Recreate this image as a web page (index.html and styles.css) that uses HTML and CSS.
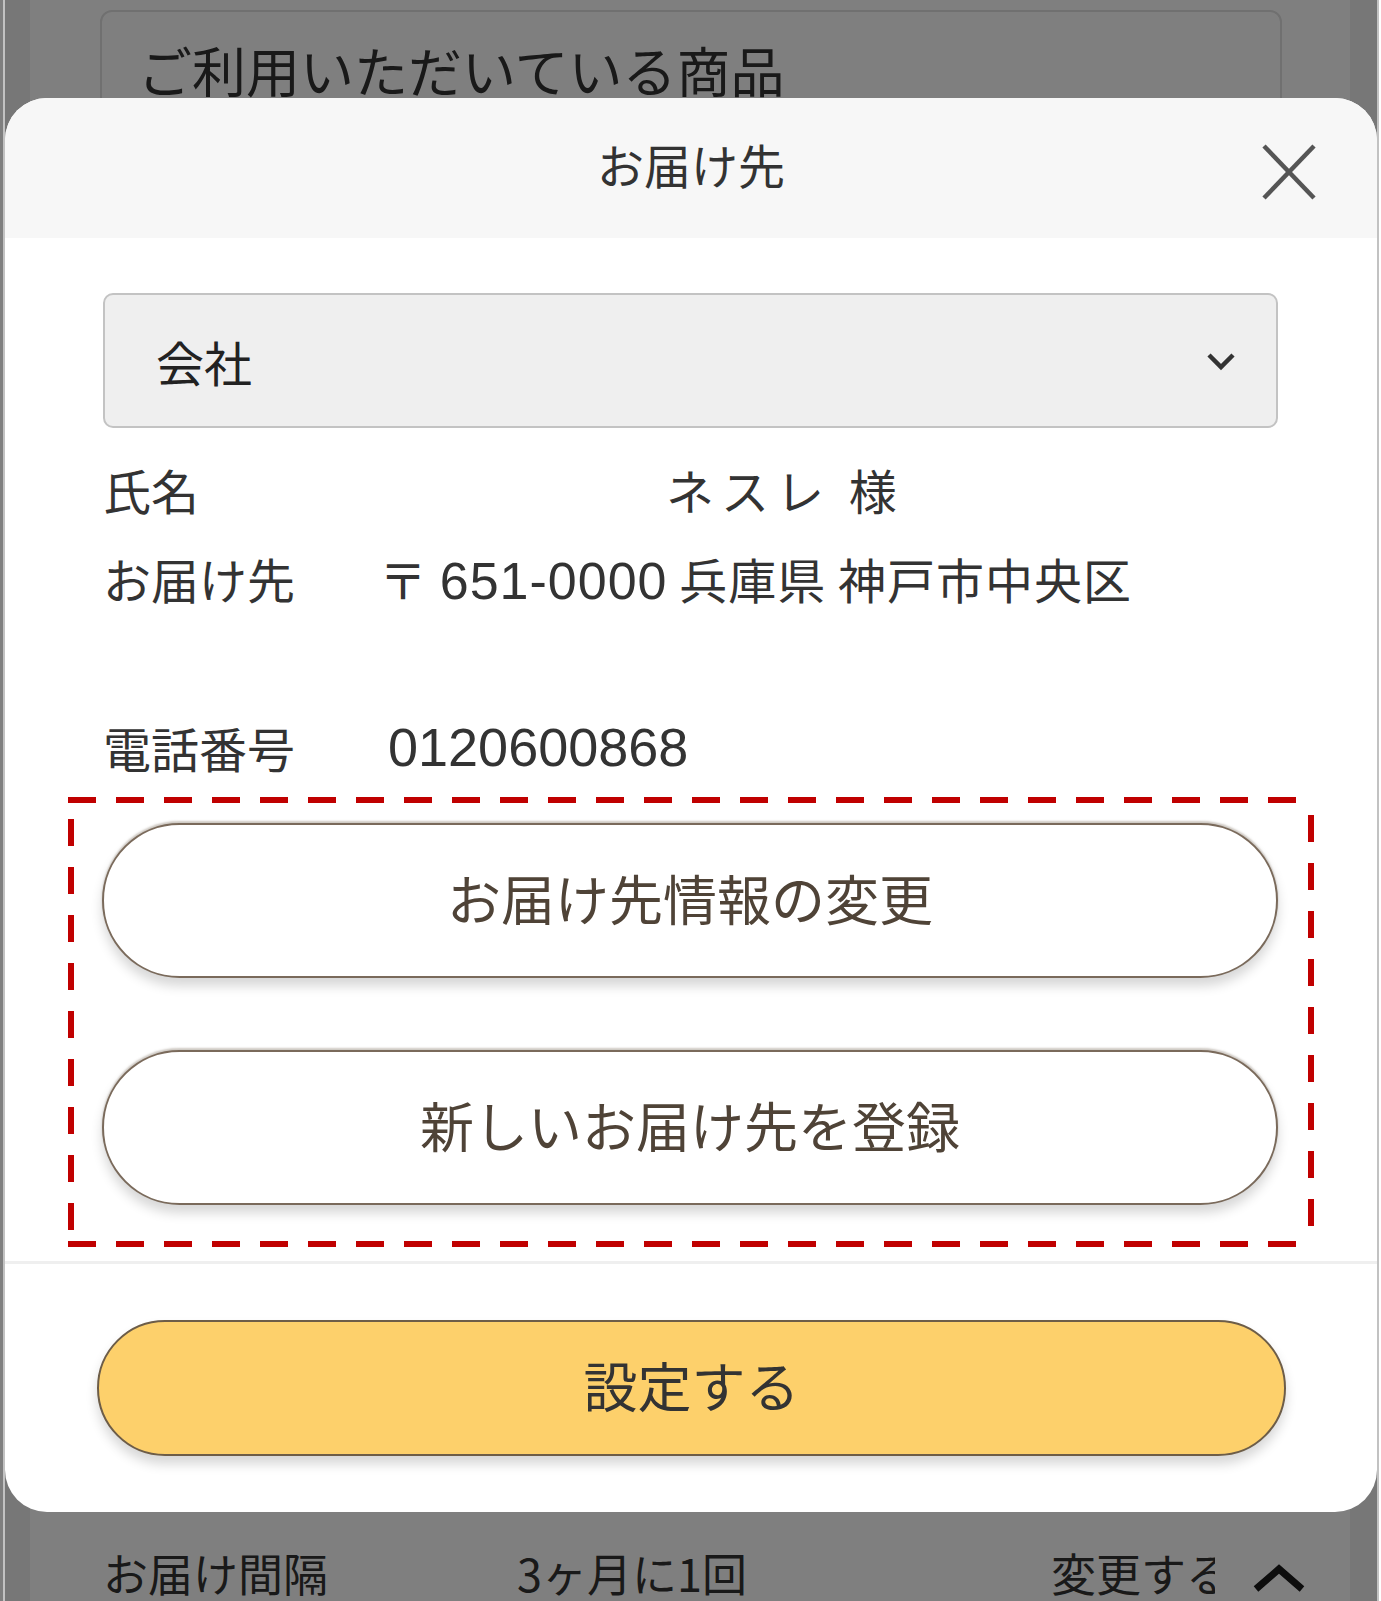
FILE: index.html
```html
<!DOCTYPE html>
<html lang="ja">
<head>
  <meta charset="UTF-8" />
  <meta name="viewport" content="width=device-width, initial-scale=1.0">
  <title>お届け先</title>
  <link rel="stylesheet" href="styles.css">
</head>
<body>
  <div class="frame">
    <div class="page">
      <div class="page-inner">
        <div class="product-card">
          <h3>ご利用いただいている商品</h3>
        </div>
        <div class="summary-row">
          <span class="summary-label">お届け間隔</span>
          <span class="summary-value">3ヶ月に1回</span>
          <span class="summary-link">変更する</span>
          <span class="summary-toggle">
            <svg width="54" height="28" viewBox="0 0 54 28"><polyline points="4,25 27,5 50,25" fill="none" stroke="#1a1a1a" stroke-width="7"/></svg>
          </span>
        </div>
      </div>
    </div>

    <div class="overlay"></div>

    <div class="modal">
      <div class="modal-header">
        <span></span>
        <h2>お届け先</h2>
        <button class="close-button" type="button" aria-label="閉じる">
          <svg width="56" height="58" viewBox="0 0 56 58"><line x1="3" y1="3" x2="53" y2="55" stroke="#555" stroke-width="4.5"/><line x1="53" y1="3" x2="3" y2="55" stroke="#555" stroke-width="4.5"/></svg>
        </button>
      </div>

      <div class="modal-body">
        <div class="select-box">
          <span>会社</span>
          <svg width="30" height="22" viewBox="0 0 30 22"><polyline points="3,5 15,17 27,5" fill="none" stroke="#333" stroke-width="4.5"/></svg>
        </div>

        <div class="info-list">
          <div class="info-row name-row">
            <span class="info-label">氏名</span>
            <span class="info-value name-value">ネスレ 様</span>
          </div>
          <div class="info-row address-row">
            <span class="info-label">お届け先</span>
            <span class="info-value address-value">〒 <span class="num">651-0000</span> 兵庫県 神戸市中央区</span>
          </div>
          <div class="info-row phone-row">
            <span class="info-label">電話番号</span>
            <span class="info-value phone-value">0120600868</span>
          </div>
        </div>

        <div class="highlight-box">
          <button class="outline-button" type="button">お届け先情報の変更</button>
          <button class="outline-button" type="button">新しいお届け先を登録</button>
        </div>
      </div>

      <div class="modal-footer">
        <button class="submit-button" type="button">設定する</button>
      </div>
    </div>
  </div>
</body>
</html>
```

FILE: styles.css
```css
* {
  box-sizing: border-box;
}
body {
  margin: 0;
  background: linear-gradient(to right, #7f7f7f 3px, #fff 3px);
  font-family: "Noto Sans CJK JP", "Liberation Sans", sans-serif;
  color: #333;
}
.frame {
  position: relative;
  width: 1376px;
  height: 1601px;
  margin-left: 3px;
  border-left: 2px solid #c2c2c2;
  border-right: 2px solid #c2c2c2;
  overflow: hidden;
}

/* page behind the dialog */
.page {
  height: 100%;
  background: #eee;
  padding: 0 27px 0 25px;
}
.page-inner {
  height: 100%;
  background: #fff;
  display: flex;
  flex-direction: column;
}
.product-card {
  margin: 10px 68px 0 70px;
  height: 200px;
  border: 2px solid #e0e0e0;
  border-radius: 12px;
  padding: 26px 0 0 36px;
}
.product-card h3 {
  margin: 0;
  font-size: 54px;
  font-weight: 400;
  line-height: 1.2;
  color: #333;
}
.summary-row {
  margin-top: auto;
  display: flex;
  align-items: center;
  height: 64px;
  margin-bottom: -3px;
  font-size: 45px;
  color: #333;
}
.summary-label {
  width: 487px;
  padding-left: 73px;
}
.summary-value {
  width: 534px;
}
.summary-link {
  width: 164px;
  overflow: hidden;
  white-space: nowrap;
}
.summary-toggle {
  display: flex;
  align-items: center;
  justify-content: center;
  width: 128px;
  height: 64px;
  background: #fff;
  padding-top: 12px;
}

.overlay {
  position: absolute;
  inset: 0;
  background: rgba(0, 0, 0, 0.5);
}

/* dialog */
.modal {
  position: absolute;
  top: 98px;
  left: 0;
  width: 1372px;
  height: 1414px;
  background: #fff;
  border-radius: 42px;
  overflow: hidden;
  display: flex;
  flex-direction: column;
}
.modal-header {
  height: 140px;
  flex-shrink: 0;
  background: #f7f7f7;
  display: grid;
  grid-template-columns: 1fr auto 1fr;
  align-items: center;
}
.modal-header h2 {
  margin: -9px 0 0;
  font-size: 47px;
  font-weight: 400;
  color: #333;
}
.close-button {
  justify-self: end;
  margin-right: 60px;
  margin-top: 8px;
  padding: 0;
  border: none;
  background: none;
  display: flex;
}
.modal-body {
  padding: 55px 99px 8px 98px;
}
.select-box {
  height: 135px;
  border: 2px solid #c3c3c3;
  border-radius: 10px;
  background: #efefef;
  display: flex;
  align-items: center;
  justify-content: space-between;
  padding: 0 40px 0 51px;
  font-size: 48px;
  color: #222;
}
.info-list {
  margin-top: 29px;
  display: flex;
  flex-direction: column;
  gap: 19px;
}
.info-row {
  display: flex;
  font-size: 48px;
  line-height: 72px;
  color: #333;
}
.name-row {
  margin-top: -4px;
}
.address-row {
  min-height: 144px;
  margin-top: -2px;
}
.phone-row {
  margin-top: 6px;
}
.info-label {
  width: 280px;
  flex-shrink: 0;
}
.name-value {
  padding-left: 283px;
  letter-spacing: 7px;
}
.address-value {
  margin-left: -4px;
  letter-spacing: 1px;
}
.num {
  font-family: "Liberation Sans", sans-serif;
  font-size: 52px;
}
.phone-value {
  font-family: "Liberation Sans", sans-serif;
  font-size: 54px;
  padding-left: 5px;
}
.highlight-box {
  margin: 14px -36px 0 -35px;
  padding: 26px 36px 42px 34px;
  display: flex;
  flex-direction: column;
  gap: 72px;
  background:
    repeating-linear-gradient(to right, #c00000 0 28px, transparent 28px 48px) top left / 100% 6px no-repeat,
    repeating-linear-gradient(to right, #c00000 0 28px, transparent 28px 48px) bottom left / 100% 6px no-repeat,
    repeating-linear-gradient(to bottom, #c00000 0 27px, transparent 27px 48px) 0 22px / 6px 100% no-repeat,
    repeating-linear-gradient(to bottom, #c00000 0 27px, transparent 27px 48px) right 0 top 18px / 6px 100% no-repeat;
}
.outline-button {
  height: 155px;
  width: 100%;
  border: 2px solid #7a6a5b;
  border-radius: 80px;
  background: #fff;
  padding-bottom: 8px;
  font-family: inherit;
  font-size: 54px;
  color: #4f4337;
  box-shadow: 0 8px 12px rgba(0, 0, 0, 0.16), 0 -2px 2px rgba(120, 105, 90, 0.35);
  cursor: pointer;
}
.modal-footer {
  margin-top: auto;
  border-top: 3px solid #efefef;
  padding: 56px 91px 56px 92px;
}
.submit-button {
  width: 100%;
  height: 136px;
  border: 2px solid #6d5d48;
  border-radius: 70px;
  background: #fdd06b;
  padding-bottom: 8px;
  font-family: inherit;
  font-size: 54px;
  color: #333;
  box-shadow: 0 8px 12px rgba(0, 0, 0, 0.16);
  cursor: pointer;
}
```
